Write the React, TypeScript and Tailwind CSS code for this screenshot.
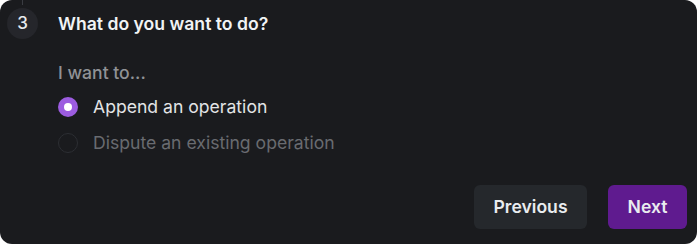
import React from "react";

export default function App() {
  return (
    <div className="w-[697px] h-[244px] bg-white" style={{ fontFamily: "Inter, 'Noto Sans', sans-serif" }}>
      <div className="relative w-full h-full rounded-[12px] bg-[#1a1b1e] flex flex-col">
        <div className="absolute left-[22px] top-0 w-px h-[5px] bg-[#3a3c42]" />
        <div className="flex items-center pl-[7px] pt-[8px]">
          <div className="w-[31px] h-[31px] rounded-full bg-[#25262b] flex items-center justify-center text-[#e9ecef] text-[17px] font-medium">
            3
          </div>
          <div className="ml-[20px] text-[17.6px] font-semibold text-[#f1f3f5] leading-[24px]">
            What do you want to do?
          </div>
        </div>
        <div className="pl-[58px] mt-[22px] text-[17.6px] font-medium text-[#909296] leading-[24px]">
          I want to...
        </div>
        <div className="pl-[58px] mt-[10px] flex items-center h-[24px]">
          <div className="w-[20px] h-[20px] rounded-full bg-[#9c5ce0] flex items-center justify-center">
            <div className="w-[8px] h-[8px] rounded-full bg-white" />
          </div>
          <span className="ml-[15px] text-[17.6px] text-[#e3e4e6] leading-[24px]">Append an operation</span>
        </div>
        <div className="pl-[58px] mt-[12px] flex items-center h-[24px]">
          <div className="w-[20px] h-[20px] rounded-full border border-[#2c2e33] bg-[#1a1b1e]" />
          <span className="ml-[15px] text-[17.6px] text-[#696b70] leading-[24px]">Dispute an existing operation</span>
        </div>
        <div className="mt-[30px] flex justify-end gap-[21px] pr-[10px]">
          <button className="h-[44px] w-[113px] rounded-[6px] bg-[#25282c] text-[#e9ecef] text-[17.6px] font-semibold">
            Previous
          </button>
          <button className="h-[44px] w-[79px] rounded-[6px] bg-[#5f1b8f] text-[#e9ecef] text-[17.6px] font-semibold">
            Next
          </button>
        </div>
      </div>
    </div>
  );
}
